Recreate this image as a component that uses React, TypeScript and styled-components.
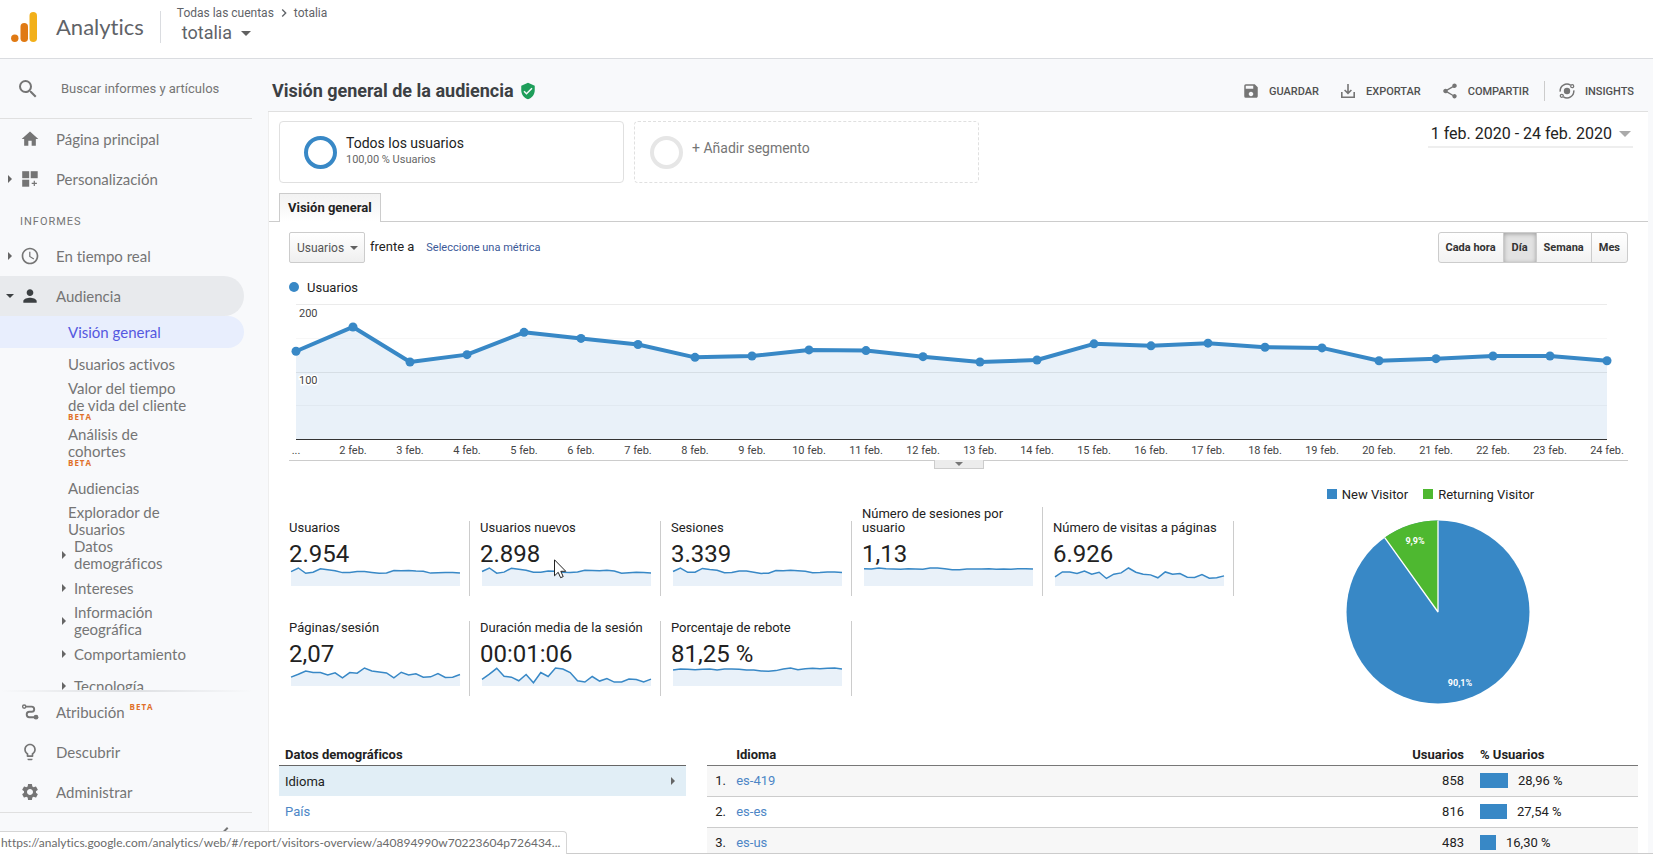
import React from "react";
import styled, { createGlobalStyle, css } from "styled-components";
import {
  MdAccessTime,
  MdChevronLeft,
  MdChevronRight,
  MdHome,
  MdLightbulbOutline,
  MdPerson,
  MdSave,
  MdSearch,
  MdSettings,
  MdShare,
  MdVerifiedUser,
} from "react-icons/md";

const color = {
  text: "#222222",
  nav: "#757575",
  page: "#f8f9fb",
  line: "#e0e0e0",
  rule: "#cccccc",
  blue: "#3888c6",
  area: "#e9f1f9",
  green: "#4eb830",
  link: "#4d86c6",
  beta: "#e0702a",
};

const roboto = `Roboto, "Liberation Sans", sans-serif`;
const navFont = `Lato, Roboto, sans-serif`;

const GlobalStyle = createGlobalStyle`
  *, *::before, *::after { box-sizing: border-box; }
  body { margin: 0; background: #fff; color: ${color.text}; font-family: ${roboto}; font-size: 13px; font-variant-ligatures: none; }
  button, input, select { font: inherit; color: inherit; margin: 0; }
  button { padding: 0; border: 0; background: none; cursor: pointer; }
  a { color: inherit; text-decoration: none; }
  svg { display: block; flex: none; }
  h1, h2, p, ul { margin: 0; padding: 0; font-size: inherit; font-weight: inherit; }
  ul { list-style: none; }
`;

/* ---------- Shell ---------- */

const Shell = styled.div`
  display: flex;
  flex-direction: column;
  height: 100vh;
  overflow: hidden;
`;

const Body = styled.div`
  flex: 1;
  min-height: 0;
  display: flex;
  background: ${color.page};
`;

const BottomEdge = styled.footer`
  position: relative;
  height: 3px;
  flex: none;
  background: #fff;
  border-top: 1px solid ${color.rule};
`;

const StatusBubble = styled.div`
  position: absolute;
  left: 0;
  bottom: 100%;
  height: 23px;
  padding: 0 6px 0 1px;
  background: #fff;
  border: 1px solid #d5d5d5;
  border-left: 0;
  border-bottom: 0;
  border-top-right-radius: 4px;
  font-family: ${navFont};
  font-size: 12px;
  line-height: 22px;
  color: #6b6b6b;
  white-space: nowrap;
`;

/* ---------- Header ---------- */

const Header = styled.header`
  display: flex;
  align-items: center;
  height: 59px;
  flex: none;
  padding-left: 11px;
  border-bottom: 1px solid #dadce0;
  background: #fff;
`;

const Logo = styled.svg`
  margin-bottom: 4px;
`;

const Brand = styled.span`
  margin-left: 19px;
  padding-bottom: 4px;
  font-family: ${navFont};
  font-size: 22px;
  line-height: 28px;
  color: #5f6368;
`;

const HeaderRule = styled.span`
  width: 1px;
  height: 32px;
  margin: 0 16px 4px;
  background: #dadce0;
`;

const Account = styled.div`
  padding-bottom: 8px;
  color: #5f6368;
`;

const Crumbs = styled.nav`
  display: flex;
  align-items: center;
  gap: 2px;
  height: 16px;
  font-size: 12px;
`;

const AccountButton = styled.button`
  display: flex;
  align-items: center;
  gap: 9px;
  margin-left: 5px;
  font-size: 18px;
  line-height: 24px;
`;

const Caret = styled.span<{ $size?: number; $tone?: string }>`
  width: 0;
  height: 0;
  border: ${(p) => p.$size ?? 4}px solid transparent;
  border-bottom: 0;
  border-top-color: ${(p) => p.$tone ?? "#616161"};
`;

const SideCaret = styled.span`
  width: 0;
  height: 0;
  border: 4px solid transparent;
  border-right: 0;
  border-left-color: #666;
`;

/* ---------- Sidebar ---------- */

const Sidebar = styled.aside`
  display: flex;
  flex-direction: column;
  flex: none;
  width: 252px;
  color: ${color.nav};
`;

const Search = styled.label`
  display: flex;
  align-items: center;
  gap: 21px;
  height: 60px;
  flex: none;
  padding-left: 16px;
  border-bottom: 1px solid ${color.line};

  input {
    flex: 1;
    min-width: 0;
    padding: 0;
    border: 0;
    outline: 0;
    background: none;
    font-size: 13px;
  }
  input::placeholder {
    color: ${color.nav};
    opacity: 1;
  }
`;

const NavScroll = styled.nav`
  flex: 1;
  min-height: 0;
  overflow: hidden;
`;

const NavShadow = styled.div`
  height: 2px;
  flex: none;
  background: linear-gradient(90deg, transparent, #dcdee1 50%, transparent);
`;

const NavItem = styled.a<{ $open?: boolean }>`
  display: grid;
  grid-template-columns: 20px 20px auto auto 1fr;
  align-items: center;
  height: 40px;
  margin-right: 8px;
  border-radius: 0 20px 20px 0;
  font-family: ${navFont};
  font-size: 15px;
  line-height: 20px;
  ${(p) => p.$open && css`background: #e8eaed;`}
`;

const NavText = styled.span`
  padding-left: 16px;
`;

const NavCaret = styled.span`
  display: flex;
  justify-content: center;
`;

const NavHeading = styled.h2`
  height: 37px;
  padding: 4px 0 0 20px;
  font-size: 11px;
  line-height: 38px;
  letter-spacing: 1px;
`;

const Beta = styled.sup`
  font: bold 8px/8px "Open Sans", sans-serif;
  letter-spacing: 1px;
  color: ${color.beta};
  vertical-align: baseline;
`;

const TopBeta = styled(Beta)`
  padding: 0 0 10px 5px;
`;

const SubItem = styled.a<{ $active?: boolean; $group?: boolean }>`
  display: flex;
  align-items: center;
  gap: 8px;
  min-height: 32px;
  margin-right: 8px;
  padding-left: ${(p) => (p.$group ? 62 : 68)}px;
  border-radius: 0 16px 16px 0;
  font-family: ${navFont};
  font-size: 15px;
  line-height: 17px;
  white-space: pre-line;
  ${(p) =>
    p.$active &&
    css`
      background: #e8eefd;
      color: #5558e0;
    `}
`;

const SubBeta = styled(Beta)`
  display: block;
  height: 12px;
  line-height: 6px;
`;

const CollapseRow = styled.div`
  display: flex;
  justify-content: flex-end;
  align-items: center;
  height: 41px;
  flex: none;
  padding-right: 15px;
  border-top: 1px solid ${color.line};
`;

/* ---------- Main ---------- */

const Main = styled.main`
  flex: 1;
  min-width: 0;
  display: flex;
  flex-direction: column;
  margin: 0 5px 0 16px;
`;

const TitleBar = styled.div`
  display: flex;
  align-items: center;
  height: 53px;
  flex: none;
  padding: 12px 14px 0 4px;
  border-bottom: 1px solid ${color.line};
`;

const Title = styled.h1`
  margin-right: 5px;
  font-size: 18px;
  font-weight: 700;
  line-height: 24px;
  color: #3c4043;
`;

const Tools = styled.div`
  display: flex;
  align-items: center;
  gap: 20px;
  margin-left: auto;
`;

const Tool = styled.button`
  display: flex;
  align-items: center;
  gap: 9px;
  font-size: 11px;
  font-weight: 500;
  color: #505050;

  svg {
    color: #757575;
  }
`;

const ToolRule = styled.span`
  width: 1px;
  height: 20px;
  margin: 0 -7px 0 -5px;
  background: ${color.rule};
`;

const Card = styled.div`
  flex: 1;
  min-height: 0;
  overflow: hidden;
  background: #fff;
  border-left: 1px solid #eeeeee;
`;

const Segments = styled.div`
  display: flex;
  align-items: flex-start;
  gap: 10px;
  padding: 9px 15px 0 10px;
`;

const Segment = styled.button<{ $add?: boolean }>`
  display: flex;
  align-items: center;
  gap: 9px;
  width: 345px;
  height: 62px;
  padding-left: ${(p) => (p.$add ? 15 : 24)}px;
  border: 1px ${(p) => (p.$add ? "dashed" : "solid")} #e0e0e0;
  border-radius: 4px;
  text-align: left;
  font-size: 14px;
  line-height: 17px;
  color: ${(p) => (p.$add ? "#757575" : "#222")};

  small {
    display: block;
    font-size: 11px;
    line-height: 15px;
    color: #666;
  }
`;

const Ring = styled.span<{ $tone: string }>`
  width: 33px;
  height: 33px;
  border: 4px solid ${(p) => p.$tone};
  border-radius: 50%;
`;

const SegmentText = styled.span<{ $add?: boolean }>`
  padding-bottom: ${(p) => (p.$add ? 8 : 3)}px;
`;

const DateRange = styled.button`
  display: flex;
  align-items: center;
  gap: 7px;
  margin-left: auto;
  padding: 0 2px 0 3px;
  height: 27px;
  border-bottom: 2px solid #eeeeee;
  font-size: 16px;
`;

const TabStrip = styled.div`
  display: flex;
  margin-top: 10px;
  padding-left: 10px;
  border-bottom: 1px solid ${color.rule};
`;

const Tab = styled.button`
  height: 29px;
  margin-bottom: -1px;
  padding: 0 8px 2px;
  border: 1px solid ${color.rule};
  border-bottom: 0;
  background: linear-gradient(#f2f2f2, #fff);
  font-size: 13px;
  font-weight: 700;
`;

const Panel = styled.section`
  padding: 10px 20px 0;
`;

const Controls = styled.div`
  display: flex;
  align-items: center;
`;

const SelectBox = styled.span`
  position: relative;
  display: flex;
  align-items: center;

  select {
    appearance: none;
    width: 76px;
    height: 31px;
    padding: 0 0 0 7px;
    border: 1px solid ${color.rule};
    border-radius: 2px;
    background: linear-gradient(#fff, #efefef);
    font-size: 12px;
    color: #555;
  }
  ${Caret} {
    position: absolute;
    right: 7px;
    pointer-events: none;
  }
`;

const Versus = styled.span`
  padding: 0 12px 3px 5px;
  font-size: 13px;
`;

const MetricLink = styled.a`
  font-size: 11px;
  color: #3b5998;
`;

const Granularity = styled.div`
  display: flex;
  margin-left: auto;
`;

const Grain = styled.button<{ $on?: boolean }>`
  height: 31px;
  padding: 0 7px;
  border: 1px solid ${color.rule};
  background: linear-gradient(#fff, #f2f2f2);
  font-size: 11px;
  font-weight: 700;
  color: #333;

  & + & {
    margin-left: -1px;
  }
  &:first-child {
    border-radius: 3px 0 0 3px;
  }
  &:last-child {
    border-radius: 0 3px 3px 0;
  }
  ${(p) =>
    p.$on &&
    css`
      padding: 0 8px;
      background: #e2e2e2;
      box-shadow: inset 0 1px 4px rgba(0, 0, 0, 0.3);
    `}
`;

const ChartLegend = styled.div`
  display: flex;
  align-items: center;
  gap: 8px;
  height: 16px;
  margin-top: 16px;

  &::before {
    content: "";
    width: 10px;
    height: 10px;
    border-radius: 50%;
    background: ${color.blue};
  }
`;

const ChartBox = styled.div`
  position: relative;
  margin-top: 9px;
  padding: 0 21px 0 7px;
  height: 157px;
  border-bottom: 1px solid ${color.rule};
`;

const Axis = styled.text`
  font-family: ${roboto};
  font-size: 11px;
  fill: #444;
`;

const Drawer = styled.button`
  position: absolute;
  top: 100%;
  left: 50%;
  display: flex;
  justify-content: center;
  width: 50px;
  height: 9px;
  margin-left: -25px;
  padding-top: 2px;
  border: 1px solid ${color.rule};
  border-top: 0;
  background: #ececec;
`;

const Overview = styled.div`
  display: flex;
  padding-top: 26px;
`;

const Metrics = styled.div`
  display: grid;
  grid-template-columns: repeat(5, 181px);
  column-gap: 10px;
  row-gap: 25px;
  align-items: end;
  align-content: start;
  padding-top: 20px;
`;

const Metric = styled.div`
  position: relative;
  padding: 0 9px 10px 0;
  border-right: 1px solid ${color.rule};
`;

const MetricName = styled.p`
  font-size: 13px;
  line-height: 14px;
  margin-right: -8px;
`;

const MetricValue = styled.p`
  margin-top: 6px;
  font-size: 24px;
  line-height: 26px;
`;

const Pointer = styled.svg`
  position: absolute;
  left: 74px;
  top: 38px;
`;

const PieColumn = styled.div`
  flex: 1;
  display: flex;
  flex-direction: column;
  align-items: center;
  gap: 19px;
  padding-left: 14px;
`;

const PieLegend = styled.ul`
  display: flex;
`;

const PieKey = styled.li<{ $tone: string }>`
  display: flex;
  align-items: center;
  gap: 5px;
  height: 14px;
  margin-right: 15px;

  &::before {
    content: "";
    width: 10px;
    height: 10px;
    background: ${(p) => p.$tone};
  }
`;

const PieText = styled.text`
  font: bold 9px ${roboto};
  fill: #fff;
  text-anchor: middle;
`;

const Tables = styled.div`
  display: grid;
  grid-template-columns: minmax(0, 7fr) minmax(0, 16fr);
  gap: 21px;
  padding: 40px 10px 0;
`;

const Dimensions = styled.div`
  h2 {
    height: 22px;
    padding-left: 6px;
    border-bottom: 1px solid #666;
    font-weight: 700;
    line-height: 22px;
  }
`;

const Dimension = styled.a<{ $on?: boolean }>`
  display: flex;
  align-items: center;
  justify-content: space-between;
  height: 30px;
  padding: 0 11px 0 6px;
  color: ${(p) => (p.$on ? color.text : color.link)};
  background: ${(p) => (p.$on ? "#e1eef6" : "none")};
`;

const DataTable = styled.table`
  width: 100%;
  border-collapse: collapse;

  th,
  td {
    padding: 0;
    text-align: left;
  }
  thead tr {
    height: 21px;
    border-bottom: 1px solid #777;
  }
  tbody tr {
    height: 31px;
    border-bottom: 1px solid ${color.rule};
  }
  tbody tr:nth-child(odd) {
    background: #f7f7f7;
  }
  th:nth-child(1),
  td:nth-child(1) {
    width: 29px;
    padding-left: 8px;
  }
  th:nth-child(3),
  td:nth-child(3) {
    width: 120px;
    padding-right: 16px;
    text-align: right;
  }
  th:nth-child(4),
  td:nth-child(4) {
    width: 158px;
  }
  a {
    color: ${color.link};
  }
`;

const Share = styled.span`
  display: flex;
  align-items: center;
  gap: 10px;
`;

const Bar = styled.span`
  height: 15px;
  background: ${color.blue};
`;

/* ---------- Drawings ---------- */

const AnalyticsLogo = () => (
  <Logo width="26" height="30" viewBox="0 0 26 30" aria-hidden="true">
    <rect x="18.5" y="0" width="7.5" height="30" rx="3.75" fill="#f2b01a" />
    <rect x="9.5" y="11" width="7.5" height="19" rx="3.75" fill="#e07a14" />
    <circle cx="3.8" cy="26.2" r="3.7" fill="#e07a14" />
  </Logo>
);

const CustomizeIcon = () => (
  <svg width="20" height="20" viewBox="0 0 20 20" fill="currentColor" aria-hidden="true">
    <rect x="2.2" y="2.2" width="7" height="7" />
    <rect x="10.7" y="2.2" width="7" height="7" />
    <rect x="2.2" y="10.7" width="7" height="7" />
    <path d="M13.7 11.7h1.2v2h2v1.2h-2v2h-1.2v-2h-2v-1.2h2z" />
  </svg>
);

const AttributionIcon = () => (
  <svg width="20" height="20" viewBox="0 0 20 20" fill="none" stroke="currentColor" aria-hidden="true">
    <circle cx="4.2" cy="4.6" r="1.6" strokeWidth="1.4" />
    <path d="M6 4.6h5.6a2.6 2.6 0 0 1 0 5.2H9.4a2.7 2.7 0 0 0 0 5.4H15" strokeWidth="1.9" />
    <circle cx="16" cy="15.2" r="2.4" fill="currentColor" stroke="none" />
  </svg>
);

const ExportIcon = () => (
  <svg width="18" height="18" viewBox="0 0 18 18" fill="none" stroke="currentColor" strokeWidth="1.6" aria-hidden="true">
    <path d="M2.8 10v5.2h12.4V10" />
    <path d="M9 2v9M5.6 8 9 11.3 12.4 8" />
  </svg>
);

const InsightsIcon = () => (
  <svg width="18" height="18" viewBox="0 0 18 18" fill="none" stroke="currentColor" strokeWidth="1.5" aria-hidden="true">
    <circle cx="9" cy="9" r="3.2" fill="currentColor" stroke="none" />
    <path d="M2.2 9.6A6.8 6.8 0 0 1 12.6 3.2M15.8 8.4A6.8 6.8 0 0 1 5.4 14.8" />
    <circle cx="14.2" cy="4.2" r="1.5" strokeWidth="1.3" />
    <circle cx="3.8" cy="13.8" r="1.5" strokeWidth="1.3" />
  </svg>
);

/* ---------- Charts ---------- */

const users = [
  130, 166, 114, 125, 158, 149, 140, 121, 123, 132, 131, 122, 114, 117, 141, 138, 142, 136, 135,
  116, 119, 123, 123, 116,
];

const linePoints = (values: number[], max: number, height: number) =>
  values
    .map((v, i) => `${((i * 1000) / (values.length - 1)).toFixed(1)},${(height - (v / max) * height).toFixed(2)}`)
    .join(" ");

const PLOT = 135;

function UsersChart() {
  const points = linePoints(users, 200, PLOT);
  const last = users.length - 1;
  return (
    <svg width="100%" height="156" overflow="visible" role="img" aria-label="Usuarios por día">
      <svg width="100%" height={PLOT} viewBox={`0 0 1000 ${PLOT}`} preserveAspectRatio="none" overflow="visible">
        <polygon points={`0,${PLOT} ${points} 1000,${PLOT}`} fill={color.area} />
      </svg>
      {[0, 0.25, 0.5, 0.75].map((f) => (
        <line
          key={f}
          x1="0"
          x2="100%"
          y1={Math.round(f * PLOT) + 0.5}
          y2={Math.round(f * PLOT) + 0.5}
          stroke="#000"
          strokeOpacity={f % 0.5 ? 0.03 : 0.08}
        />
      ))}
      <line x1="0" x2="100%" y1={PLOT + 0.5} y2={PLOT + 0.5} stroke="#333" />
      <svg width="100%" height={PLOT} viewBox={`0 0 1000 ${PLOT}`} preserveAspectRatio="none" overflow="visible">
        <polyline
          points={points}
          fill="none"
          stroke={color.blue}
          strokeWidth="4"
          strokeLinejoin="round"
          vectorEffect="non-scaling-stroke"
        />
      </svg>
      {users.map((v, i) => (
        <circle key={i} cx={`${(i * 100) / last}%`} cy={PLOT - (v / 200) * PLOT} r="4.5" fill={color.blue} />
      ))}
      <Axis x="3" y="13">200</Axis>
      <Axis x="3" y="80" stroke="#fff" strokeWidth="3" paintOrder="stroke">100</Axis>
      {users.map((_, i) => (
        <Axis key={i} x={`${(i * 100) / last}%`} y="150" textAnchor="middle">
          {i === 0 ? "..." : `${i + 1} feb.`}
        </Axis>
      ))}
    </svg>
  );
}

function Sparkline({ values }: { values: number[] }) {
  const points = linePoints(values, Math.max(...values), 17);
  return (
    <svg
      width="100%"
      height="19"
      viewBox="-12 -1 1012 19"
      preserveAspectRatio="none"
      overflow="visible"
      aria-hidden="true"
    >
      <polygon points={`0,18 ${points} 1000,18`} fill={color.area} />
      <polyline
        points={points}
        fill="none"
        stroke={color.blue}
        strokeWidth="1.5"
        vectorEffect="non-scaling-stroke"
      />
    </svg>
  );
}

const Pie = () => (
  <svg width="184" height="184" viewBox="-92 -92 184 184" role="img" aria-label="New Visitor 90,1%, Returning Visitor 9,9%">
    <circle r="91.5" fill={color.blue} />
    <path d="M0 0V-91.5A91.5 91.5 0 0 0 -53.3 -74.4Z" fill={color.green} />
    <path d="M0 -91.5V0L-53.3 -74.4" fill="none" stroke="#fff" strokeWidth="1.3" strokeLinejoin="bevel" />
    <PieText x="-23" y="-68">9,9%</PieText>
    <PieText x="22" y="74">90,1%</PieText>
  </svg>
);

const MousePointer = () => (
  <Pointer width="13" height="20" viewBox="0 0 13 20" aria-hidden="true">
    <path d="M.5 .8v16l3.7-3.5 2.4 5.4 2.6-1.1-2.4-5.3h5z" fill="#fff" stroke="#222" />
  </Pointer>
);

/* ---------- Data ---------- */

const metrics: { name: string; value: string; trend: number[]; pointer?: boolean }[] = [
  { name: "Usuarios", value: "2.954", trend: users },
  {
    name: "Usuarios nuevos",
    value: "2.898",
    pointer: true,
    trend: [130, 164, 114, 124, 162, 152, 142, 124, 122, 134, 132, 122, 120, 126, 142, 140, 138, 142, 134, 114, 118, 122, 120, 116],
  },
  {
    name: "Sesiones",
    value: "3.339",
    trend: [130, 164, 122, 124, 160, 150, 142, 118, 120, 136, 134, 124, 112, 114, 140, 138, 142, 138, 132, 118, 120, 126, 126, 120],
  },
  {
    name: "Número de sesiones por usuario",
    value: "1,13",
    trend: [50, 49, 52, 50, 49, 48, 50, 49, 48, 52, 52, 50, 47, 47, 49, 49, 49, 50, 48, 49, 48, 50, 50, 49],
  },
  {
    name: "Número de visitas a páginas",
    value: "6.926",
    trend: [25, 40, 40, 35, 43, 33, 39, 20, 33, 37, 52, 39, 33, 31, 22, 40, 33, 35, 24, 23, 32, 21, 22, 28],
  },
  {
    name: "Páginas/sesión",
    value: "2,07",
    trend: [24, 33, 43, 38, 38, 31, 37, 22, 38, 36, 52, 43, 40, 37, 22, 39, 31, 34, 24, 25, 35, 23, 24, 32],
  },
  {
    name: "Duración media de la sesión",
    value: "00:01:06",
    trend: [17, 33, 51, 27, 24, 13, 32, 7, 38, 26, 52, 49, 38, 13, 9, 26, 12, 20, 9, 9, 18, 17, 9, 18],
  },
  {
    name: "Porcentaje de rebote",
    value: "81,25 %",
    trend: [46, 49, 48, 47, 48, 49, 46, 49, 49, 48, 46, 46, 43, 42, 44, 49, 52, 47, 50, 51, 50, 51, 52, 49],
  },
];

const reports: { text: string; active?: boolean; group?: boolean; beta?: boolean }[] = [
  { text: "Visión general", active: true },
  { text: "Usuarios activos" },
  { text: "Valor del tiempo\nde vida del cliente", beta: true },
  { text: "Análisis de\ncohortes", beta: true },
  { text: "Audiencias" },
  { text: "Explorador de\nUsuarios" },
  { text: "Datos\ndemográficos", group: true },
  { text: "Intereses", group: true },
  { text: "Información\ngeográfica", group: true },
  { text: "Comportamiento", group: true },
  { text: "Tecnología", group: true },
];

const languages = [
  { name: "es-419", count: 858, share: 28.96 },
  { name: "es-es", count: 816, share: 27.54 },
  { name: "es-us", count: 483, share: 16.3 },
];

/* ---------- Page ---------- */

export default function App() {
  return (
    <Shell>
      <GlobalStyle />
      <Header>
        <AnalyticsLogo />
        <Brand>Analytics</Brand>
        <HeaderRule />
        <Account>
          <Crumbs>
            <a href="#cuentas">Todas las cuentas</a>
            <MdChevronRight size={16} />
            <a href="#totalia">totalia</a>
          </Crumbs>
          <AccountButton type="button">
            totalia <Caret $size={5} />
          </AccountButton>
        </Account>
      </Header>

      <Body>
        <Sidebar>
          <Search>
            <MdSearch size={24} />
            <input type="search" placeholder="Buscar informes y artículos" aria-label="Buscar informes y artículos" />
          </Search>
          <NavScroll>
            <NavItem href="#home">
              <NavCaret />
              <MdHome size={20} />
              <NavText>Página principal</NavText>
            </NavItem>
            <NavItem href="#personalizacion">
              <NavCaret><SideCaret /></NavCaret>
              <CustomizeIcon />
              <NavText>Personalización</NavText>
            </NavItem>
            <NavHeading>INFORMES</NavHeading>
            <NavItem href="#tiempo-real">
              <NavCaret><SideCaret /></NavCaret>
              <MdAccessTime size={20} />
              <NavText>En tiempo real</NavText>
            </NavItem>
            <NavItem href="#audiencia" $open>
              <NavCaret><Caret $tone="#3c4043" /></NavCaret>
              <MdPerson size={20} color="#3c4043" />
              <NavText>Audiencia</NavText>
            </NavItem>
            {reports.map((r) => (
              <SubItem key={r.text} href="#informe" $active={r.active} $group={r.group}>
                {r.group && <SideCaret />}
                <span>
                  {r.text}
                  {r.beta && <SubBeta>BETA</SubBeta>}
                </span>
              </SubItem>
            ))}
          </NavScroll>
          <NavShadow />
          <nav>
            <NavItem href="#atribucion">
              <NavCaret />
              <AttributionIcon />
              <NavText>Atribución</NavText>
              <TopBeta>BETA</TopBeta>
            </NavItem>
            <NavItem href="#descubrir">
              <NavCaret />
              <MdLightbulbOutline size={20} />
              <NavText>Descubrir</NavText>
            </NavItem>
            <NavItem href="#administrar">
              <NavCaret />
              <MdSettings size={20} />
              <NavText>Administrar</NavText>
            </NavItem>
          </nav>
          <CollapseRow>
            <button type="button" aria-label="Contraer menú">
              <MdChevronLeft size={24} />
            </button>
          </CollapseRow>
        </Sidebar>

        <Main>
          <TitleBar>
            <Title>Visión general de la audiencia</Title>
            <MdVerifiedUser size={18} color="#1e9e5a" />
            <Tools>
              <Tool type="button"><MdSave size={18} />GUARDAR</Tool>
              <Tool type="button"><ExportIcon />EXPORTAR</Tool>
              <Tool type="button"><MdShare size={18} />COMPARTIR</Tool>
              <ToolRule />
              <Tool type="button"><InsightsIcon />INSIGHTS</Tool>
            </Tools>
          </TitleBar>

          <Card>
            <Segments>
              <Segment type="button">
                <Ring $tone={color.blue} />
                <SegmentText>
                  Todos los usuarios
                  <small>100,00 % Usuarios</small>
                </SegmentText>
              </Segment>
              <Segment type="button" $add>
                <Ring $tone="#e6e6e6" />
                <SegmentText $add>+ Añadir segmento</SegmentText>
              </Segment>
              <DateRange type="button">
                1 feb. 2020 - 24 feb. 2020 <Caret $size={6} $tone="#aaaaaa" />
              </DateRange>
            </Segments>

            <TabStrip>
              <Tab type="button">Visión general</Tab>
            </TabStrip>

            <Panel>
              <Controls>
                <SelectBox>
                  <select aria-label="Métrica">
                    <option>Usuarios</option>
                  </select>
                  <Caret />
                </SelectBox>
                <Versus>frente a</Versus>
                <MetricLink href="#metrica">Seleccione una métrica</MetricLink>
                <Granularity>
                  <Grain type="button">Cada hora</Grain>
                  <Grain type="button" $on>Día</Grain>
                  <Grain type="button">Semana</Grain>
                  <Grain type="button">Mes</Grain>
                </Granularity>
              </Controls>

              <ChartLegend>Usuarios</ChartLegend>
              <ChartBox>
                <UsersChart />
                <Drawer type="button" aria-label="Anotaciones"><Caret $tone="#777" /></Drawer>
              </ChartBox>

              <Overview>
                <Metrics>
                  {metrics.map((m) => (
                    <Metric key={m.name}>
                      <MetricName>{m.name}</MetricName>
                      <MetricValue>{m.value}</MetricValue>
                      <Sparkline values={m.trend} />
                      {m.pointer && <MousePointer />}
                    </Metric>
                  ))}
                </Metrics>
                <PieColumn>
                  <PieLegend>
                    <PieKey $tone={color.blue}>New Visitor</PieKey>
                    <PieKey $tone={color.green}>Returning Visitor</PieKey>
                  </PieLegend>
                  <Pie />
                </PieColumn>
              </Overview>
            </Panel>

            <Tables>
              <Dimensions>
                <h2>Datos demográficos</h2>
                <Dimension href="#idioma" $on>Idioma <SideCaret /></Dimension>
                <Dimension href="#pais">País</Dimension>
              </Dimensions>
              <DataTable>
                <thead>
                  <tr>
                    <th aria-label="Posición" />
                    <th>Idioma</th>
                    <th>Usuarios</th>
                    <th>% Usuarios</th>
                  </tr>
                </thead>
                <tbody>
                  {languages.map((l, i) => (
                    <tr key={l.name}>
                      <td>{i + 1}.</td>
                      <td><a href="#idioma">{l.name}</a></td>
                      <td>{l.count}</td>
                      <td>
                        <Share>
                          <Bar style={{ width: Math.round(l.share * 0.97) }} />
                          {l.share.toFixed(2).replace(".", ",")} %
                        </Share>
                      </td>
                    </tr>
                  ))}
                </tbody>
              </DataTable>
            </Tables>
          </Card>
        </Main>
      </Body>

      <BottomEdge>
        <StatusBubble>
          https://analytics.google.com/analytics/web/#/report/visitors-overview/a40894990w70223604p726434...
        </StatusBubble>
      </BottomEdge>
    </Shell>
  );
}
